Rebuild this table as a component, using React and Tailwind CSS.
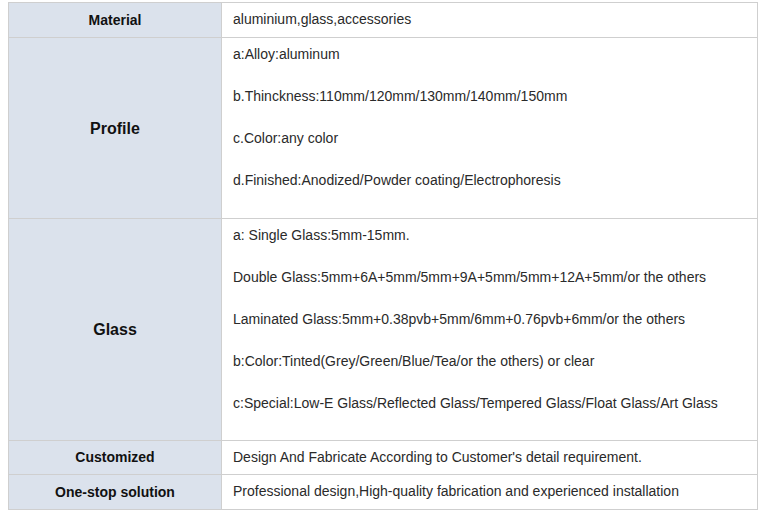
import React from "react";

const rows = [
  { label: "Material", big: false, pb: "pb-[7px]", lines: ["aluminium,glass,accessories"], spaced: false },
  {
    label: "Profile",
    big: true,
    pb: "pb-[6px]",
    lines: [
      "a:Alloy:aluminum",
      "b.Thinckness:110mm/120mm/130mm/140mm/150mm",
      "c.Color:any color",
      "d.Finished:Anodized/Powder coating/Electrophoresis",
    ],
    spaced: true,
  },
  {
    label: "Glass",
    big: true,
    pb: "pb-[5px]",
    lines: [
      "a: Single Glass:5mm-15mm.",
      "Double Glass:5mm+6A+5mm/5mm+9A+5mm/5mm+12A+5mm/or the others",
      "Laminated Glass:5mm+0.38pvb+5mm/6mm+0.76pvb+6mm/or the others",
      "b:Color:Tinted(Grey/Green/Blue/Tea/or the others) or clear",
      "c:Special:Low-E Glass/Reflected Glass/Tempered Glass/Float Glass/Art Glass",
    ],
    spaced: true,
  },
  { label: "Customized", big: false, pb: "pb-[6px]", lines: ["Design And Fabricate According to Customer's detail requirement."], spaced: false },
  { label: "One-stop solution", big: false, pb: "pb-[7px]", lines: ["Professional design,High-quality fabrication and experienced installation"], spaced: false },
];

export default function App() {
  return (
    <div className="bg-white w-[762px] h-[513px] pt-[2px] pl-[8px] font-['Liberation_Sans',Arial,sans-serif] text-[14px] leading-[21px] text-[#2a2a2a]">
      <table className="w-[750px] border-collapse table-fixed">
        <colgroup>
          <col className="w-[213px]" />
          <col />
        </colgroup>
        <tbody>
          {rows.map((r) => (
            <tr key={r.label}>
              <td
                className={`border border-[#cfcfcf] bg-[#dbe2ec] text-center font-bold text-[#111] px-[11px] py-0 ${
                  r.big ? "text-[16px]" : "text-[14px]"
                }`}
              >
                {r.label}
              </td>
              <td className={`border border-[#cfcfcf] px-[11px] pt-[6px] ${r.pb}`}>
                {r.lines.map((l) => (
                  <div key={l} className={r.spaced ? "mb-[21px]" : ""}>
                    {l}
                  </div>
                ))}
              </td>
            </tr>
          ))}
        </tbody>
      </table>
    </div>
  );
}
